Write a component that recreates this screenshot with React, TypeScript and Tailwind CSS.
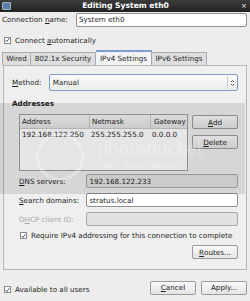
import React from 'react';

// Mnemonic underline helper
function U({ children }: { children: React.ReactNode }) {
  return <span className="underline underline-offset-[1px]">{children}</span>;
}

function Check({ label }: { label: React.ReactNode }) {
  return (
    <div className="flex items-center gap-[4px]">
      <div className="w-[7px] h-[7px] border border-[#8a8a8a] bg-white flex items-center justify-center">
        <svg width="6" height="6" viewBox="0 0 6 6">
          <path d="M0.8 3.2 L2.3 4.8 L5.2 0.9" stroke="#333" strokeWidth="1" fill="none" />
        </svg>
      </div>
      <span>{label}</span>
    </div>
  );
}

function Btn({ w, children }: { w: string; children: React.ReactNode }) {
  return (
    <div className={`${w} h-[14px] rounded-[2px] border border-[#9a9a9a] bg-gradient-to-b from-[#fafafa] to-[#e4e4e4] flex items-center justify-center text-[#222]`}>
      {children}
    </div>
  );
}

function Field({ label, value, kind }: { label: React.ReactNode; value?: string; kind: 'ro' | 'edit' | 'off' }) {
  const box =
    kind === 'edit'
      ? 'bg-white border-[#8f8f8f]'
      : 'bg-[#e2e2e2] border-[#a9a9a9]';
  return (
    <div className="flex items-center h-[14px]">
      <div className={`w-[68px] ${kind === 'off' ? 'text-[#a8a8a8]' : ''}`}>{label}</div>
      <div className={`w-[153px] h-[14px] border rounded-[2px] ${box} flex items-center px-[2px]`}>{value}</div>
    </div>
  );
}

export default function App() {
  return (
    <div
      className="relative w-[250px] h-[301px] overflow-hidden bg-[#ededed] text-[7.2px] leading-none text-[#1e1e1e]"
      style={{ fontFamily: '"DejaVu Sans", sans-serif' }}
    >
      {/* title bar */}
      <div className="h-[12px] bg-gradient-to-b from-[#3c3c3c] to-[#222] flex items-center px-[2px] text-white">
        <div className="w-[9px] h-[8px] bg-[#5b7fa8] border border-[#9bb] rounded-[1px]" />
        <div className="flex-1 text-center font-bold text-[7.6px]">Editing System eth0</div>
        <div className="w-[8px] text-center text-[7px]">×</div>
      </div>

      {/* connection name */}
      <div className="flex items-center h-[14px] mt-[1px] pl-[2px]">
        <div className="w-[74px]">Connection <U>n</U>ame:</div>
        <div className="w-[171px] h-[14px] bg-white border border-[#8f8f8f] rounded-[2px] flex items-center px-[2px]">System eth0</div>
      </div>

      <div className="h-[13px] mt-[7px] pl-[4px] flex items-center">
        <Check label={<>Connect <U>a</U>utomatically</>} />
      </div>

      {/* tabs */}
      <div className="flex items-end h-[15px] mt-[3px] pl-[2px]">
        <div className="w-[29px] h-[13px] border border-b-0 border-[#aaa] bg-[#dedede] flex items-center justify-center">Wired</div>
        <div className="w-[65px] h-[13px] border border-b-0 border-l-0 border-[#aaa] bg-[#dedede] flex items-center justify-center">802.1x Security</div>
        <div className="w-[56px] h-[15px] border border-b-0 border-l-0 border-[#aaa] border-t-[#7b9fd0] border-t-2 bg-[#f3f3f3] flex items-center justify-center">IPv4 Settings</div>
        <div className="w-[55px] h-[13px] border border-b-0 border-l-0 border-[#aaa] bg-[#dedede] flex items-center justify-center">IPv6 Settings</div>
      </div>

      {/* panel */}
      <div className="mx-[3px] h-[205px] border border-[#b5b5b5] bg-[#efefef] pt-[8px] pl-[8px] pr-[8px]">
        <div className="flex items-center h-[17px]">
          <div className="w-[37px]"><U>M</U>ethod:</div>
          <div className="w-[190px] h-[17px] rounded-[2px] border border-[#7f9cc6] bg-gradient-to-b from-[#fbfbfb] to-[#ececec] flex items-center pl-[3px] pr-[1px]">
            <span className="flex-1">Manual</span>
            <div className="w-[9px] h-[13px] border-l border-[#ccc] flex items-center justify-center">
              <svg width="5" height="8" viewBox="0 0 5 8">
                <path d="M1 3 L2.5 1.5 L4 3 M1 5 L2.5 6.5 L4 5" stroke="#444" strokeWidth="0.9" fill="none" />
              </svg>
            </div>
          </div>
        </div>

        <div className="mt-[9px] font-bold">Addresses</div>

        <div className="flex mt-[7px] pl-[7px] gap-[4px]">
          <div className="w-[171px] h-[57px] border border-[#9f9f9f] bg-white">
            <div className="flex h-[14px] bg-gradient-to-b from-[#f4f4f4] to-[#e3e3e3] border-b border-[#c8c8c8]">
              <div className="w-[70px] pl-[2px] flex items-center border-r border-[#c8c8c8]">Address</div>
              <div className="w-[61px] pl-[2px] flex items-center border-r border-[#c8c8c8]">Netmask</div>
              <div className="flex-1 pl-[3px] flex items-center">Gateway</div>
            </div>
            <div className="flex h-[11px] items-center">
              <div className="w-[70px] pl-[2px]">192.168.122.250</div>
              <div className="w-[61px] pl-[1px]">255.255.255.0</div>
              <div className="flex-1 pl-[1px]">0.0.0.0</div>
            </div>
          </div>
          <div className="flex flex-col gap-[6px] pt-[1px]">
            <Btn w="w-[46px]"><U>A</U>dd</Btn>
            <Btn w="w-[46px]"><U>D</U>elete</Btn>
          </div>
        </div>

        <div className="flex flex-col gap-[5px] mt-[3px] pl-[7px]">
          <Field label={<><U>D</U>NS servers:</>} value="192.168.122.233" kind="ro" />
          <Field label={<><U>S</U>earch domains:</>} value="stratus.local" kind="edit" />
          <Field label={<>D<U>H</U>CP client ID:</>} kind="off" />
        </div>

        <div className="mt-[5px] pl-[8px] h-[9px] flex items-center">
          <Check label="Require IPv4 addressing for this connection to complete" />
        </div>

        <div className="flex justify-end mt-[5px]">
          <Btn w="w-[46px]"><U>R</U>outes...</Btn>
        </div>
      </div>

      {/* bottom */}
      <div className="flex items-center mt-[11px] pl-[4px] pr-[3px]">
        <div className="flex-1 pt-[4px]">
          <Check label="Available to all users" />
        </div>
        <div className="flex gap-[5px]">
          <Btn w="w-[46px]"><U>C</U>ancel</Btn>
          <Btn w="w-[46px]">Apply...</Btn>
        </div>
      </div>

      {/* photobucket watermark overlay */}
      <div className="absolute left-0 top-[103px] w-[245px] h-[91px] bg-black/[0.1] pointer-events-none">
        <div className="absolute left-[36px] top-[30px] w-[48px] h-[48px] rounded-full border-[3px] border-white/30" />
        <div className="absolute left-[97px] top-[38px] text-[17px] text-white/30">photobucket</div>
        <div className="absolute left-[97px] top-[58px] text-[9px] text-white/35">host. store. share.</div>
      </div>
    </div>
  );
}
